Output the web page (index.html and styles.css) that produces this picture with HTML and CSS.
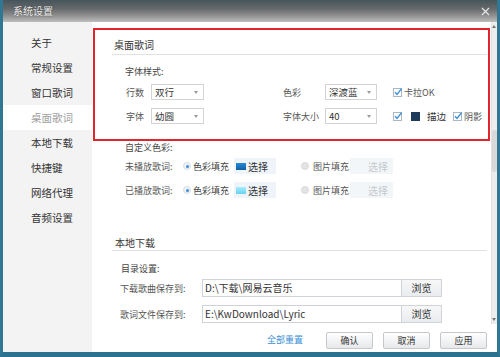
FILE: index.html
```html
<!DOCTYPE html>
<html lang="zh-CN">
<head>
<meta charset="utf-8">
<title>系统设置</title>
<link rel="stylesheet" href="styles.css">
</head>
<body>
<div class="window">
  <div class="titlebar">
    <span class="title">系统设置</span>
    <svg class="close" width="9" height="9" viewBox="0 0 9 9"><path d="M1 1L8 8M8 1L1 8" stroke="#e6e6e6" stroke-width="1.2"/></svg>
  </div>
  <div class="body">
    <ul class="sidebar">
      <li>关于</li>
      <li>常规设置</li>
      <li>窗口歌词</li>
      <li class="active">桌面歌词</li>
      <li>本地下载</li>
      <li>快捷键</li>
      <li>网络代理</li>
      <li>音频设置</li>
    </ul>
    <div class="pane">
      <div class="scrollwrap">
        <div class="content">
          <section class="highlight">
            <h2 class="heading">桌面歌词</h2>
            <div class="sub">字体样式:</div>
            <div class="row">
              <span class="lbl">行数</span>
              <div class="select sel-a">双行<i class="arrow"></i></div>
              <span class="lbl2">色彩</span>
              <div class="select sel-b">深渡蓝<i class="arrow"></i></div>
              <span class="chk first">
                <svg width="10" height="10" viewBox="0 0 10 10"><rect x="0.5" y="1.5" width="8" height="8" fill="#fff" stroke="#aab8c6"/><path d="M2 5.2L4 7.4L8.6 1.6" fill="none" stroke="#3b8fd9" stroke-width="1.4"/></svg>
                <span>卡拉OK</span>
              </span>
            </div>
            <div class="row gap">
              <span class="lbl">字体</span>
              <div class="select sel-a">幼圆<i class="arrow"></i></div>
              <span class="lbl2">字体大小</span>
              <div class="select sel-b">40<i class="arrow"></i></div>
              <span class="chk first">
                <svg width="10" height="10" viewBox="0 0 10 10"><rect x="0.5" y="1.5" width="8" height="8" fill="#fff" stroke="#aab8c6"/><path d="M2 5.2L4 7.4L8.6 1.6" fill="none" stroke="#3b8fd9" stroke-width="1.4"/></svg>
              </span>
              <span class="navy"></span>
              <span class="stroke">描边</span>
              <span class="chk second">
                <svg width="10" height="10" viewBox="0 0 10 10"><rect x="0.5" y="1.5" width="8" height="8" fill="#fff" stroke="#aab8c6"/><path d="M2 5.2L4 7.4L8.6 1.6" fill="none" stroke="#3b8fd9" stroke-width="1.4"/></svg>
                <span>阴影</span>
              </span>
            </div>
          </section>

          <div class="custom">
            <div class="sub2">自定义色彩:</div>
            <div class="crow">
              <span class="clbl">未播放歌词:</span>
              <span class="radio on"></span>
              <span class="rtext">色彩填充</span>
              <span class="pick"><i class="sw sw-dark"></i>选择</span>
              <span class="radio off"></span>
              <span class="rtext2">图片填充</span>
              <span class="pick dis"><i class="sw"></i>选择</span>
            </div>
            <div class="crow gap">
              <span class="clbl">已播放歌词:</span>
              <span class="radio on"></span>
              <span class="rtext">色彩填充</span>
              <span class="pick"><i class="sw sw-light"></i>选择</span>
              <span class="radio off"></span>
              <span class="rtext2">图片填充</span>
              <span class="pick dis"><i class="sw"></i>选择</span>
            </div>
          </div>

          <section class="local">
            <h2 class="heading2">本地下载</h2>
            <div class="sub3">目录设置:</div>
            <div class="prow">
              <span class="plbl">下载歌曲保存到:</span>
              <div class="path">D:\下载\网易云音乐</div>
              <span class="browse">浏览</span>
            </div>
            <div class="prow gap">
              <span class="plbl">歌词文件保存到:</span>
              <div class="path">E:\KwDownload\Lyric</div>
              <span class="browse">浏览</span>
            </div>
          </section>
        </div>
        <div class="scrollbar">
          <i class="sarrow up"></i>
          <span class="strack-top"></span>
          <span class="thumb"></span>
          <span class="strack-rest"></span>
          <i class="sarrow down"></i>
        </div>
      </div>
      <div class="footer">
        <span class="reset">全部重置</span>
        <span class="btn">确认</span>
        <span class="btn">取消</span>
        <span class="btn">应用</span>
      </div>
    </div>
  </div>
</div>
</body>
</html>
```

FILE: styles.css
```css
* { box-sizing: border-box; }
html, body { margin: 0; padding: 0; }
body {
  width: 500px;
  height: 357px;
  overflow: hidden;
  font-family: "Noto Sans CJK SC", "Noto Sans", sans-serif;
  color: #555;
  background: #2f7893;
}
.window {
  width: 500px;
  height: 357px;
  border-left: 3px solid #2f7893;
  border-right: 3px solid #2f7893;
  border-bottom: 5px solid #2b7190;
  display: flex;
  flex-direction: column;
  background: #fff;
}
.titlebar {
  height: 22px;
  flex: none;
  display: flex;
  align-items: center;
  justify-content: space-between;
  padding: 0 7px 0 10px;
  background: linear-gradient(to bottom, #46555b 0%, #66696b 40%, #8e8e8e 70%, #bdbdbd 100%);
}
.title {
  font-size: 10px;
  line-height: 12px;
  color: #ececec;
  text-shadow: 0 0 2px rgba(0,0,0,0.5);
}
.close { display: block; }
.body {
  flex: 1;
  display: flex;
  min-height: 0;
}
.sidebar {
  list-style: none;
  margin: 0;
  padding: 8px 0 0 0;
  width: 89px;
  flex: none;
  background: #f3f3f3;
}
.sidebar li {
  height: 25px;
  line-height: 25px;
  padding-left: 28px;
  font-size: 10.5px;
  color: #333;
}
.sidebar li.active {
  background: #fff;
  color: #a0a0a0;
}
.pane {
  flex: 1;
  display: flex;
  flex-direction: column;
  min-width: 0;
}
.scrollwrap {
  height: 302px;
  flex: none;
  display: flex;
  overflow: hidden;
}
.content {
  width: 399px;
  flex: none;
  padding-top: 6px;
}
.highlight {
  margin: 0 1px;
  border: 2px solid #e0262c;
  padding-bottom: 15px;
}
.heading {
  margin: 9px 1px 0 17px;
  padding: 0 0 3px 2px;
  font-size: 10px;
  line-height: 12px;
  font-weight: normal;
  color: #333;
  border-bottom: 1px solid #e2e2e2;
}
.sub {
  margin-top: 11px;
  padding-left: 30px;
  font-size: 9px;
  line-height: 12px;
  color: #444;
}
.row {
  margin-top: 6px;
  height: 16px;
  padding-left: 31px;
  display: flex;
  align-items: center;
  font-size: 9px;
}
.row.gap { margin-top: 8px; }
.lbl { width: 25px; flex: none; color: #555; }
.lbl2 { width: 42px; margin-left: 79px; flex: none; color: #555; }
.select {
  position: relative;
  height: 16px;
  border: 1px solid #d3d3d3;
  background: #fff;
  font-size: 9.5px;
  line-height: 14px;
  padding-left: 3px;
  color: #333;
  flex: none;
}
.sel-a { width: 53px; }
.sel-b { width: 52px; }
.arrow {
  position: absolute;
  right: 5px;
  top: 6px;
  width: 0;
  height: 0;
  border-left: 2.5px solid transparent;
  border-right: 2.5px solid transparent;
  border-top: 3px solid #9a9a9a;
}
.chk {
  display: flex;
  align-items: center;
  gap: 1px;
  flex: none;
  font-size: 9px;
  color: #555;
}
.chk svg { display: block; }
.chk.first { margin-left: 16px; }
.chk.second { margin-left: 7px; }
.navy {
  width: 9px;
  height: 9px;
  margin-left: 8px;
  background: #1f3b5c;
  flex: none;
}
.stroke {
  margin-left: 7px;
  font-size: 9.5px;
  color: #333;
}
.custom {
  padding-left: 33px;
  font-size: 9px;
}
.sub2 {
  margin-top: 1px;
  line-height: 12px;
  color: #444;
}
.crow {
  margin-top: 4px;
  height: 16px;
  display: flex;
  align-items: center;
}
.crow.gap { margin-top: 8px; }
.clbl { width: 58px; flex: none; color: #555; }
.radio {
  width: 8px;
  height: 8px;
  border-radius: 50%;
  flex: none;
  position: relative;
}
.radio.on {
  background: #eef2f6;
  border: 1px solid #d7dde3;
}
.radio.on::after {
  content: "";
  position: absolute;
  left: 1.5px;
  top: 1.5px;
  width: 3px;
  height: 3px;
  border-radius: 50%;
  background: #3b8fd9;
}
.radio.off {
  background: #e4e4e4;
  border: 1px solid #dadada;
  margin-left: 25px;
}
.rtext { margin-left: 2px; width: 41px; flex: none; color: #444; }
.rtext2 { margin-left: 4px; width: 37px; flex: none; color: #555; }
.pick {
  display: flex;
  align-items: center;
  gap: 2px;
  height: 16px;
  width: 42px;
  padding-left: 2px;
  background: #eef4fa;
  font-size: 10px;
  color: #333;
  flex: none;
}
.pick.dis {
  width: 43px;
  background: #f3f6f9;
  color: #c4c8cc;
  gap: 6px;
}
.sw { width: 10px; height: 7px; flex: none; display: block; }
.sw-dark { background: linear-gradient(#2c8ad6, #0e5fa6); }
.sw-light { background: linear-gradient(#a6ecfb, #68d2f0); }
.local { padding-top: 39px; }
.heading2 {
  margin: 0 4px 0 20px;
  padding: 0 0 1px 3px;
  font-size: 10px;
  line-height: 12px;
  font-weight: normal;
  color: #333;
  border-bottom: 1px solid #e2e2e2;
}
.sub3 {
  margin-top: 12px;
  padding-left: 29px;
  font-size: 9px;
  line-height: 12px;
  color: #444;
}
.prow {
  margin-top: 4px;
  height: 18px;
  padding-left: 28px;
  display: flex;
  align-items: center;
}
.prow.gap { margin-top: 8px; }
.plbl { width: 82px; flex: none; font-size: 9px; color: #555; }
.path {
  width: 200px;
  height: 18px;
  border: 1px solid #cdd3d8;
  padding-left: 2px;
  font-size: 10px;
  line-height: 16px;
  color: #333;
  flex: none;
  background: #fff;
}
.browse {
  width: 40px;
  height: 18px;
  border: 1px solid #d0d4d8;
  border-left: none;
  background: linear-gradient(#f7f7f7, #e9ecef);
  font-size: 10px;
  line-height: 16px;
  text-align: center;
  color: #333;
  flex: none;
}
.scrollbar {
  width: 6px;
  flex: none;
  display: flex;
  flex-direction: column;
  align-items: stretch;
  background: #ededed;
  border-left: 1px solid #e3e3e3;
}
.sarrow {
  display: block;
  height: 8px;
  flex: none;
  position: relative;
}
.sarrow::after {
  content: "";
  position: absolute;
  left: 0;
  width: 0;
  height: 0;
  border-left: 2.5px solid transparent;
  border-right: 2.5px solid transparent;
}
.sarrow.up::after { top: 3px; border-bottom: 3px solid #777; }
.sarrow.down::after { top: 2px; border-top: 3px solid #777; }
.strack-top { height: 100px; flex: none; }
.thumb {
  height: 42px;
  flex: none;
  background: #d9d9d9;
  border-radius: 2px;
}
.strack-rest { flex: 1; }
.footer {
  flex: 1;
  display: flex;
  justify-content: flex-end;
  align-items: flex-start;
  padding: 8px 10px 0 0;
  gap: 10px;
}
.reset {
  font-size: 9px;
  line-height: 16px;
  color: #3d8fd6;
  margin-right: 13px;
}
.btn {
  width: 47px;
  height: 17px;
  border: 1px solid #c4c8cc;
  border-radius: 2px;
  background: linear-gradient(#ffffff, #e6e8ea);
  font-size: 9px;
  line-height: 15px;
  text-align: center;
  color: #333;
}
```
